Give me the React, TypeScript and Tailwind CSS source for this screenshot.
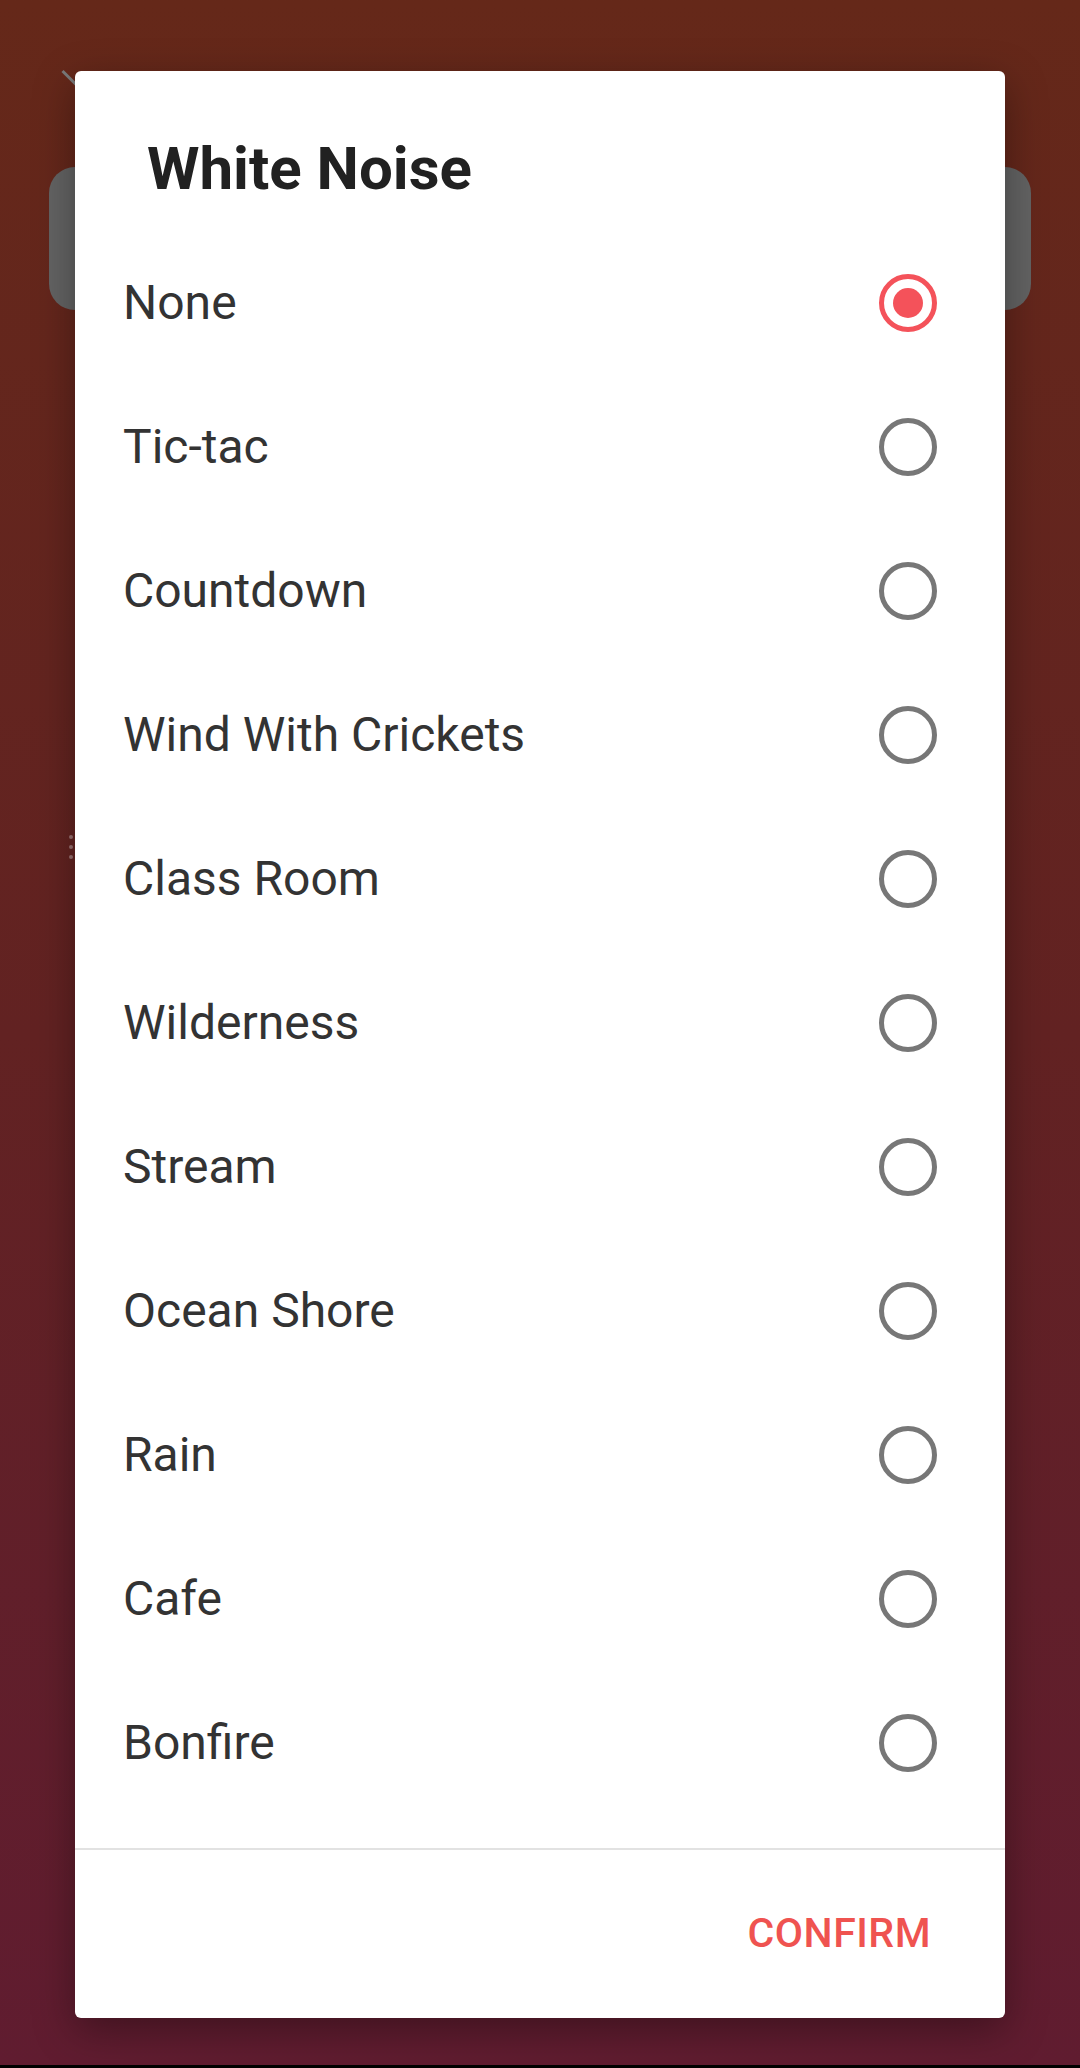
import { useState } from 'react';

const sounds = [
  'None',
  'Tic-tac',
  'Countdown',
  'Wind With Crickets',
  'Class Room',
  'Wilderness',
  'Stream',
  'Ocean Shore',
  'Rain',
  'Cafe',
  'Bonfire',
];

function Radio({ checked }: { checked: boolean }) {
  if (checked) {
    return (
      <span className="flex h-[58px] w-[58px] items-center justify-center rounded-full border-[5px] border-[#f4525a]">
        <span className="h-[30px] w-[30px] rounded-full bg-[#f4525a]" />
      </span>
    );
  }
  return <span className="block h-[58px] w-[58px] rounded-full border-[5px] border-[#777777]" />;
}

export default function App() {
  const [selected, setSelected] = useState('None');

  return (
    <div className="relative h-[2068px] w-[1080px] overflow-hidden bg-gradient-to-b from-[#652819] via-[#622222] to-[#601c30] font-['Roboto',sans-serif]">
      {/* dimmed screen behind the dialog */}
      <div className="flex flex-col px-[49px] pt-[78px]">
        <div className="ml-[10px] h-[3px] w-[24px] rotate-45 bg-[#7a7a7a]" />
        <div className="mt-[86px] h-[143px] rounded-[26px] bg-[#636363]" />
        <div className="mt-[525px] ml-[20px] flex flex-col gap-[6px]">
          <span className="h-[4px] w-[4px] rounded-full bg-[#9a7070]" />
          <span className="h-[4px] w-[4px] rounded-full bg-[#9a7070]" />
          <span className="h-[4px] w-[4px] rounded-full bg-[#9a7070]" />
        </div>
      </div>
      <div className="absolute bottom-0 left-0 h-[3px] w-full bg-black" />

      {/* dialog */}
      <div className="absolute left-[75px] top-[71px] flex h-[1947px] w-[930px] flex-col rounded-[6px] bg-white shadow-[0_12px_40px_rgba(0,0,0,0.35)]">
        <div className="pl-[72px] pt-[68px] pb-[32px] text-[60px] leading-[60px] font-bold text-[#212121]">
          White Noise
        </div>

        <div className="flex flex-col">
          {sounds.map((s) => (
            <button
              key={s}
              type="button"
              onClick={() => setSelected(s)}
              className="flex h-[144px] items-center justify-between pl-[48px] pr-[68px] text-left"
            >
              <span className="text-[48px] text-[#333333]">{s}</span>
              <Radio checked={selected === s} />
            </button>
          ))}
        </div>

        <div className="mt-auto border-t-[2px] border-[#e2e2e2]">
          <div className="flex h-[168px] items-center justify-end pr-[74px]">
            <button type="button" className="text-[41px] font-medium tracking-[0.5px] text-[#ef5350]">
              CONFIRM
            </button>
          </div>
        </div>
      </div>
    </div>
  );
}
